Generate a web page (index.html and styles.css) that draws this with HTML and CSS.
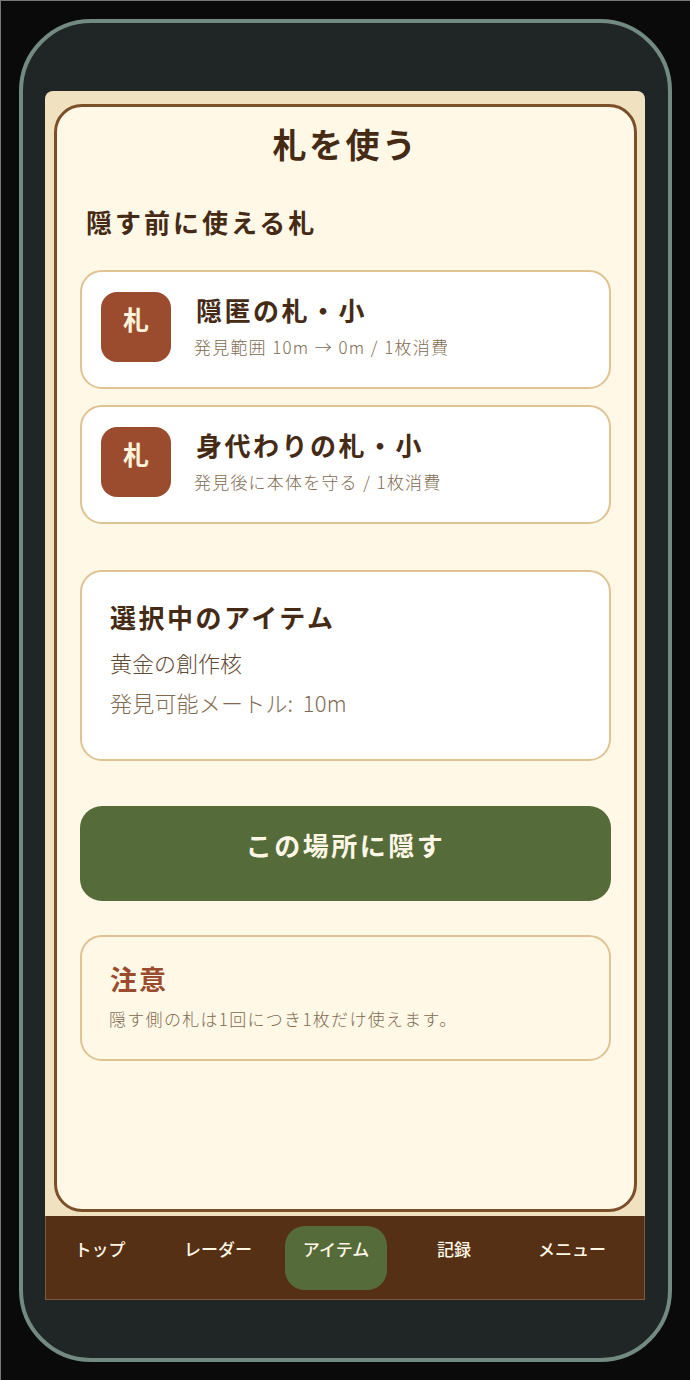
FILE: index.html
```html
<!DOCTYPE html>
<html lang="ja">
<head>
    <meta charset="UTF-8">
    <meta name="viewport" content="width=device-width, initial-scale=1.0">
    <title>札を使う</title>
    <link rel="stylesheet" href="styles.css">
</head>
<body>
    <div class="phone">
        <div class="screen">
            <main class="panel">
                <h1 class="page-title">札を使う</h1>
                <h2 class="section-title">隠す前に使える札</h2>

                <div class="card-list">
                    <div class="card charm">
                        <div class="charm-icon">札</div>
                        <div>
                            <div class="charm-name">隠匿の札・小</div>
                            <div class="charm-desc">発見範囲 10m → 0m / 1枚消費</div>
                        </div>
                    </div>
                    <div class="card charm">
                        <div class="charm-icon">札</div>
                        <div>
                            <div class="charm-name">身代わりの札・小</div>
                            <div class="charm-desc">発見後に本体を守る / 1枚消費</div>
                        </div>
                    </div>
                </div>

                <div class="card selected">
                    <div class="selected-title">選択中のアイテム</div>
                    <div class="selected-item">黄金の創作核</div>
                    <div class="selected-range">発見可能メートル: 10m</div>
                </div>

                <button class="hide-button" type="button">この場所に隠す</button>

                <div class="notice">
                    <div class="notice-title">注意</div>
                    <div class="notice-text">隠す側の札は1回につき1枚だけ使えます。</div>
                </div>
            </main>

            <nav class="tabs">
                <a class="tab">トップ</a>
                <a class="tab">レーダー</a>
                <a class="tab active">アイテム</a>
                <a class="tab">記録</a>
                <a class="tab">メニュー</a>
            </nav>
        </div>
    </div>
</body>
</html>
```

FILE: styles.css
```css
/* page + phone frame */
* { box-sizing: border-box; }
body { margin: 0; height: 1380px; overflow: hidden; background: #0a0a0a; border-top: 1px solid #777; border-left: 1px solid #777; font-family: "Noto Sans CJK JP", "Noto Sans", sans-serif; color: #452b15; }
.phone { width: 653px; height: 1343px; margin: 18px 0 0 18px; padding: 68px 23px 0 22px; background: #202625; border: 4px solid #728a80; border-radius: 72px; }
.screen { height: 1209px; background: #f0e2c0; border-radius: 8px 8px 0 0; display: flex; flex-direction: column; }

/* main panel */
.panel { width: 583px; height: 1108px; margin: 13px 0 0 9px; padding: 0 23px; background: #fff8e7; border: 3px solid #7a4f2a; border-radius: 28px; }
.page-title { margin: 9px 0 0; height: 56px; font-size: 34px; line-height: 56px; font-weight: 700; letter-spacing: 2.5px; text-align: center; }
.section-title { margin: 30px 0 0 6px; height: 40px; font-size: 26px; line-height: 40px; font-weight: 700; letter-spacing: 3px; }

.card { background: #fff; border: 2px solid #dfc393; border-radius: 22px; }
.card-list { display: flex; flex-direction: column; gap: 16px; margin-top: 28px; }
.charm { height: 119px; padding: 20px 0 0 19px; display: flex; gap: 25px; }
.charm-icon { width: 70px; height: 70px; background: #9b4c2e; color: #fff3dc; border-radius: 16px; font-size: 26px; line-height: 54px; font-weight: 700; text-align: center; }
.charm-name { margin-top: -1px; font-size: 26px; line-height: 38px; font-weight: 700; letter-spacing: 2.5px; }
.charm-desc { margin: 5px 0 0 -2px; font-size: 17px; line-height: 26px; font-weight: 300; letter-spacing: 1.2px; word-spacing: .5px; color: #806b52; }

.selected { height: 191px; margin-top: 46px; padding: 26px 0 0 28px; }
.selected-title { font-size: 26px; line-height: 38px; font-weight: 700; letter-spacing: 2.5px; }
.selected-item { margin-top: 9px; font-size: 22px; line-height: 34px; font-weight: 300; color: #5f4a34; }
.selected-range { margin-top: 6px; font-size: 22px; line-height: 34px; font-weight: 300; word-spacing: 4.5px; letter-spacing: .2px; color: #806b52; }

.hide-button { display: block; width: 100%; height: 95px; margin-top: 45px; padding: 0 0 19px; background: #566b3a; color: #fff7e6; border: none; border-radius: 22px; font-family: inherit; font-size: 26px; font-weight: 700; letter-spacing: 2.5px; }

.notice { height: 126px; margin-top: 34px; padding: 23px 0 0 28px; border: 2px solid #dfc393; border-radius: 22px; }
.notice-title { font-size: 27px; line-height: 38px; font-weight: 700; letter-spacing: 2px; color: #9b4c2e; }
.notice-text { margin: 8px 0 0 -1px; font-size: 17px; line-height: 26px; font-weight: 300; letter-spacing: 1.3px; color: #806b52; }

/* bottom tabs */
.tabs { height: 84px; margin-top: 4px; padding: 10px 0 9px 3px; display: flex; gap: 16px; background: #553015; border: 1px solid #7a5c40; border-top: none; }
.tab { width: 102px; height: 64px; padding-top: 11px; border-radius: 20px; color: #fff7e6; font-size: 17px; line-height: 24px; font-weight: 500; text-align: center; }
.tab.active { background: #566b3a; }
```
